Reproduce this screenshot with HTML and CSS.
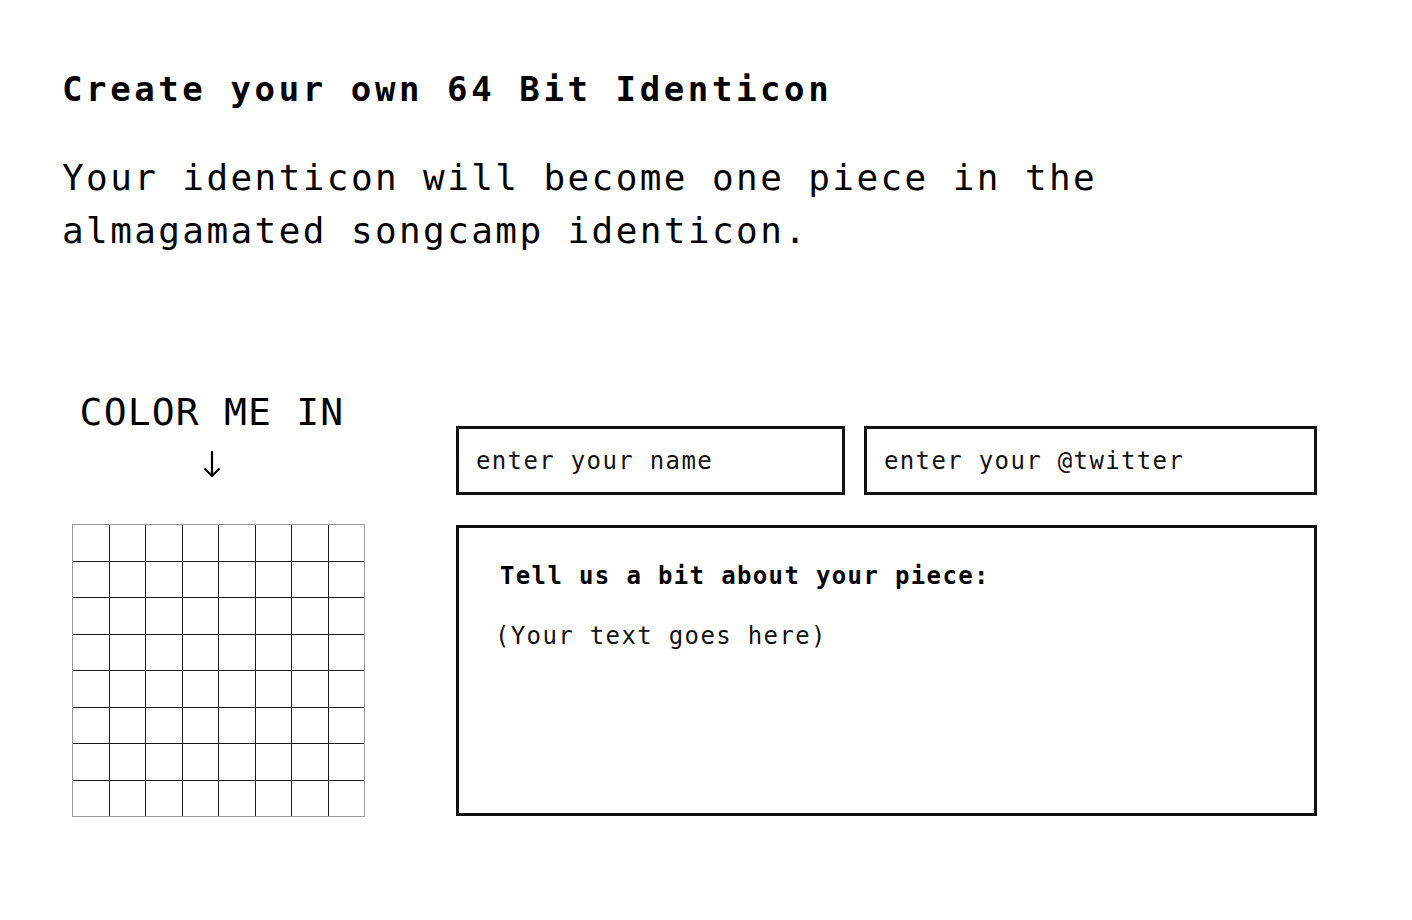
FILE: index.html
```html
<!DOCTYPE html>
<html lang="en">
<head>
  <meta charset="UTF-8" />
  <meta name="viewport" content="width=device-width, initial-scale=1" />
  <title>64 Bit Identicon</title>
  <link rel="stylesheet" href="styles.css">
</head>
<body>
  <div class="page">
    <h1>Create your own 64 Bit Identicon</h1>
    <p class="intro">Your identicon will become one piece in the<br>almagamated songcamp identicon.</p>

    <div class="maker">
      <div class="canvas-col">
        <div class="color-label">COLOR ME IN</div>
        <div class="arrow">
          <svg width="18" height="28" viewBox="0 0 18 28" fill="none" stroke="#000" stroke-width="2.2">
            <path d="M9 1 V26" />
            <path d="M1.5 18.5 L9 26 L16.5 18.5" />
          </svg>
        </div>
        <div class="grid" id="grid"></div>
      </div>

      <form class="details">
        <div class="fields">
          <input type="text" class="name-input" placeholder="enter your name" />
          <input type="text" class="twitter-input" placeholder="enter your @twitter" />
        </div>
        <div class="about">
          <label for="about-text">Tell us a bit about your piece:</label>
          <textarea id="about-text" placeholder="(Your text goes here)"></textarea>
        </div>
      </form>
    </div>
  </div>

  <script>
    const grid = document.getElementById('grid');

    // 8 x 8 = 64 bits
    for (let i = 0; i < 64; i++) {
      const cell = document.createElement('div');
      cell.className = 'cell';
      cell.addEventListener('click', () => {
        cell.classList.toggle('on');
      });
      grid.appendChild(cell);
    }
  </script>
</body>
</html>
```

FILE: styles.css
```css
body {
  margin: 0;
  background: #fff;
  color: #000;
  font-family: 'DejaVu Sans Mono', 'Liberation Mono', monospace;
}
.page {
  padding: 68px 0 0 62px;
}
h1 {
  margin: 0;
  font-size: 34px;
  line-height: 42px;
  font-weight: 700;
  letter-spacing: 3.6px;
}
.intro {
  margin: 41px 0 0;
  font-size: 36px;
  line-height: 53px;
  letter-spacing: 2.4px;
}
.maker {
  display: flex;
  margin-top: 133px;
}
.canvas-col {
  width: 300px;
  display: flex;
  flex-direction: column;
  align-items: center;
}
.color-label {
  font-size: 38px;
  line-height: 44px;
  letter-spacing: 1.2px;
}
.arrow {
  height: 28px;
  margin-top: 16px;
}
.arrow svg {
  display: block;
}
.grid {
  margin-top: 46px;
  margin-left: 10px;
  align-self: flex-start;
  border: 1px solid #999;
  background: #1a1a1a;
  display: grid;
  grid-template-columns: repeat(4, 36px 35px);
  grid-template-rows: repeat(4, 36px 35px);
  gap: 1px;
}
.cell {
  background: #fff;
  cursor: pointer;
}
.cell.on {
  background: #000;
}
.details {
  margin: 36px 0 0 94px;
  width: 861px;
  display: flex;
  flex-direction: column;
  gap: 30px;
}
.fields {
  display: flex;
  gap: 19px;
}
.fields input {
  height: 69px;
  box-sizing: border-box;
  border: 3px solid #111;
  border-radius: 0;
  padding: 0 17px;
  font-family: inherit;
  font-size: 24px;
  letter-spacing: 1.35px;
  color: #111;
  outline: none;
}
.name-input {
  flex: 0 0 389px;
}
.twitter-input {
  flex: 1;
  min-width: 0;
}
.fields input::placeholder,
.about textarea::placeholder {
  color: #111;
  opacity: 1;
}
.about {
  height: 291px;
  box-sizing: border-box;
  border: 3px solid #111;
  padding-top: 33px;
  display: flex;
  flex-direction: column;
}
.about label {
  padding-left: 41px;
  font-size: 24px;
  line-height: 30px;
  font-weight: 700;
  letter-spacing: 1.35px;
}
.about textarea {
  flex: 1;
  border: none;
  resize: none;
  outline: none;
  padding: 30px 36px 0;
  font-family: inherit;
  font-size: 24px;
  line-height: 30px;
  letter-spacing: 1.35px;
  color: #111;
}
```
